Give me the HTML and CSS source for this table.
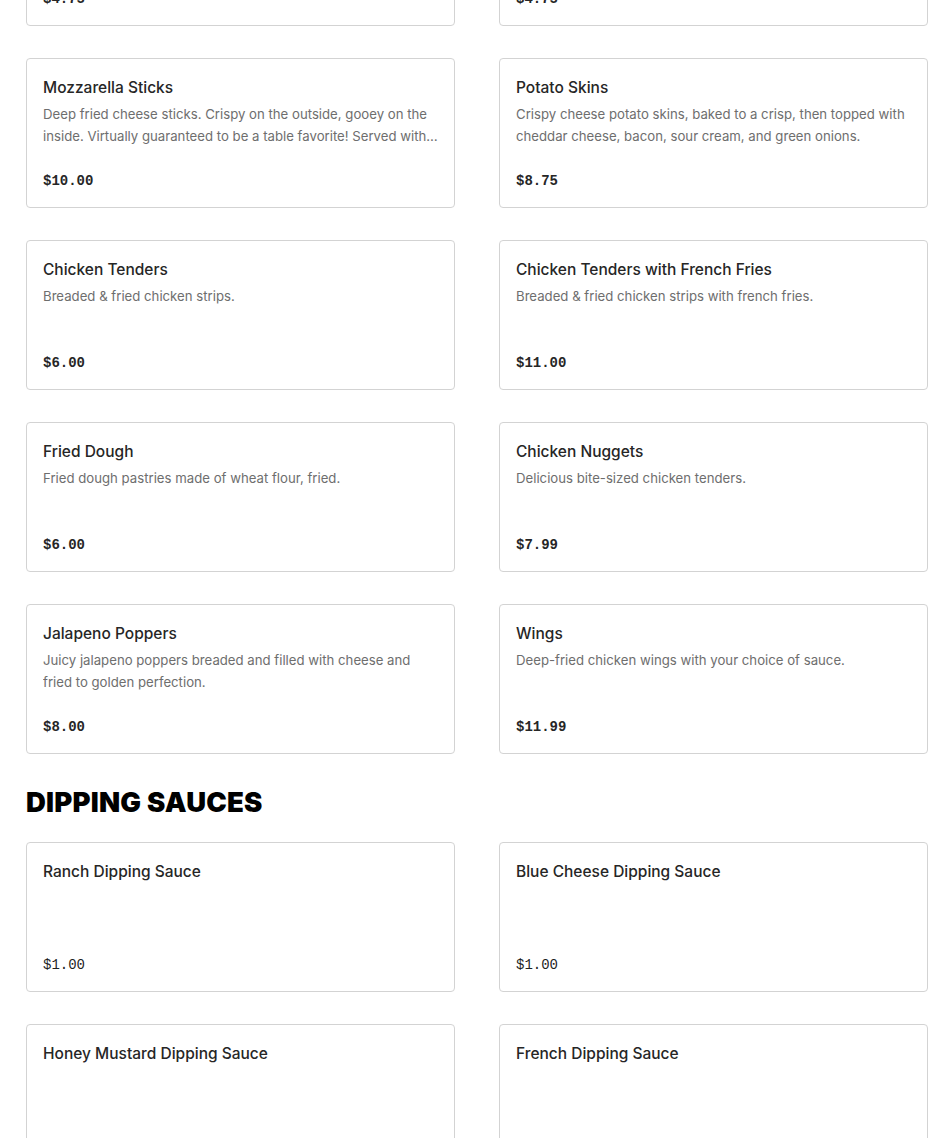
FILE: index.html
```html
<!DOCTYPE html>
<html lang="en">
<head>
<meta charset="utf-8">
<title>Menu</title>
<link rel="stylesheet" href="styles.css">
</head>
<body>
<main class="menu">
  <section class="section section-first">
    <div class="grid">
      <div class="card">
        <h3 class="item-title">French Fries</h3>
        <p class="item-desc">Crispy golden french fries.</p>
        <div class="price">$4.75</div>
      </div>
      <div class="card">
        <h3 class="item-title">Onion Rings</h3>
        <p class="item-desc">Battered and fried onion rings.</p>
        <div class="price">$4.75</div>
      </div>
      <div class="card">
        <h3 class="item-title">Mozzarella Sticks</h3>
        <p class="item-desc">Deep fried cheese sticks. Crispy on the outside, gooey on the inside. Virtually guaranteed to be a table favorite! Served with marinara sauce.</p>
        <div class="price">$10.00</div>
      </div>
      <div class="card">
        <h3 class="item-title">Potato Skins</h3>
        <p class="item-desc">Crispy cheese potato skins, baked to a crisp, then topped with cheddar cheese, bacon, sour cream, and green onions.</p>
        <div class="price">$8.75</div>
      </div>
      <div class="card">
        <h3 class="item-title">Chicken Tenders</h3>
        <p class="item-desc">Breaded &amp; fried chicken strips.</p>
        <div class="price">$6.00</div>
      </div>
      <div class="card">
        <h3 class="item-title">Chicken Tenders with French Fries</h3>
        <p class="item-desc">Breaded &amp; fried chicken strips with french fries.</p>
        <div class="price">$11.00</div>
      </div>
      <div class="card">
        <h3 class="item-title">Fried Dough</h3>
        <p class="item-desc">Fried dough pastries made of wheat flour, fried.</p>
        <div class="price">$6.00</div>
      </div>
      <div class="card">
        <h3 class="item-title">Chicken Nuggets</h3>
        <p class="item-desc">Delicious bite-sized chicken tenders.</p>
        <div class="price">$7.99</div>
      </div>
      <div class="card">
        <h3 class="item-title">Jalapeno Poppers</h3>
        <p class="item-desc">Juicy jalapeno poppers breaded and filled with cheese and fried to golden perfection.</p>
        <div class="price">$8.00</div>
      </div>
      <div class="card">
        <h3 class="item-title">Wings</h3>
        <p class="item-desc">Deep-fried chicken wings with your choice of sauce.</p>
        <div class="price">$11.99</div>
      </div>
    </div>
  </section>

  <section class="section">
    <h2 class="section-title">DIPPING SAUCES</h2>
    <div class="grid">
      <div class="card">
        <h3 class="item-title">Ranch Dipping Sauce</h3>
        <p class="item-desc"></p>
        <div class="price price-light">$1.00</div>
      </div>
      <div class="card">
        <h3 class="item-title">Blue Cheese Dipping Sauce</h3>
        <p class="item-desc"></p>
        <div class="price price-light">$1.00</div>
      </div>
      <div class="card">
        <h3 class="item-title">Honey Mustard Dipping Sauce</h3>
        <p class="item-desc"></p>
        <div class="price price-light">$1.00</div>
      </div>
      <div class="card">
        <h3 class="item-title">French Dipping Sauce</h3>
        <p class="item-desc"></p>
        <div class="price price-light">$1.00</div>
      </div>
    </div>
  </section>
</main>
</body>
</html>
```

FILE: styles.css
```css
* {
  box-sizing: border-box;
}

html, body {
  margin: 0;
  padding: 0;
  background: #ffffff;
}

body {
  font-family: Inter, "Liberation Sans", Arial, sans-serif;
  color: #262626;
  overflow: hidden;
}

.menu {
  padding: 0 22px 0 26px;
  margin-top: -124px;
}

.section + .section {
  margin-top: 32px;
}

.section-title {
  margin: 0 0 24px 0;
  font-family: Inter, "Liberation Sans", Arial, sans-serif;
  font-weight: 900;
  font-size: 27.5px;
  line-height: 32px;
  letter-spacing: 0.2px;
  color: #000000;
}

.grid {
  display: grid;
  grid-template-columns: 1fr 1fr;
  column-gap: 44px;
  row-gap: 32px;
}

.card {
  border: 1px solid #d3d3d3;
  border-radius: 4px;
  height: 150px;
  padding: 17px 16px 16px;
  display: flex;
  flex-direction: column;
  background: #fff;
}

.item-title {
  margin: 0 0 3px 0;
  font-size: 15.5px;
  line-height: 24px;
  font-weight: 500;
  color: #262626;
}

.item-desc {
  margin: 0;
  font-size: 13.2px;
  line-height: 22px;
  height: 44px;
  color: #6e6e6e;
  display: -webkit-box;
  -webkit-line-clamp: 2;
  -webkit-box-orient: vertical;
  overflow: hidden;
}

.price {
  margin-top: auto;
  font-family: "Liberation Mono", "DejaVu Sans Mono", monospace;
  font-size: 14px;
  line-height: 20px;
  font-weight: 700;
  color: #262626;
}

.price-light {
  font-weight: 400;
  color: #1f1f1f;
}
```
